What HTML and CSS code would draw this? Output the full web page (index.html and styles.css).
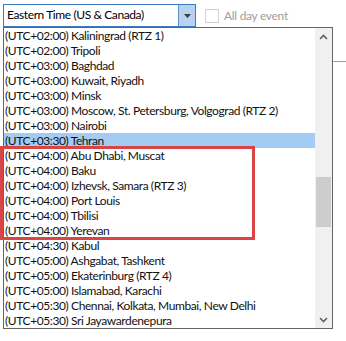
FILE: index.html
```html
<!DOCTYPE html>
<html lang="en">
  <head>
    <meta charset="UTF-8" />
    <title>time zone</title>
    <link rel="stylesheet" href="styles.css">
  </head>
  <body>
    <div class="toolbar">
      <div class="combo">
        <span class="combo-text">Eastern Time (US &amp; Canada)</span>
        <span class="combo-btn">
          <svg width="7" height="4" viewBox="0 0 7 4"><path d="M0 0h7L3.5 4z" fill="#3a3a3a"/></svg>
        </span>
      </div>
      <div class="allday">
        <span class="check"></span>
        <span class="allday-label">All day event</span>
      </div>
    </div>
    <div class="backline"></div>
    <div class="list">
      <div class="items">
        <div class="row">(UTC+02:00) Kaliningrad (RTZ 1)</div>
        <div class="row">(UTC+02:00) Tripoli</div>
        <div class="row">(UTC+03:00) Baghdad</div>
        <div class="row">(UTC+03:00) Kuwait, Riyadh</div>
        <div class="row">(UTC+03:00) Minsk</div>
        <div class="row">(UTC+03:00) Moscow, St. Petersburg, Volgograd (RTZ 2)</div>
        <div class="row">(UTC+03:00) Nairobi</div>
        <div class="row selected">(UTC+03:30) Tehran</div>
        <div class="row">(UTC+04:00) Abu Dhabi, Muscat</div>
        <div class="row">(UTC+04:00) Baku</div>
        <div class="row">(UTC+04:00) Izhevsk, Samara (RTZ 3)</div>
        <div class="row">(UTC+04:00) Port Louis</div>
        <div class="row">(UTC+04:00) Tbilisi</div>
        <div class="row">(UTC+04:00) Yerevan</div>
        <div class="row">(UTC+04:30) Kabul</div>
        <div class="row">(UTC+05:00) Ashgabat, Tashkent</div>
        <div class="row">(UTC+05:00) Ekaterinburg (RTZ 4)</div>
        <div class="row">(UTC+05:00) Islamabad, Karachi</div>
        <div class="row">(UTC+05:30) Chennai, Kolkata, Mumbai, New Delhi</div>
        <div class="row">(UTC+05:30) Sri Jayawardenepura</div>
      </div>
      <div class="scrollbar">
        <span class="arrow">
          <svg width="9" height="6" viewBox="0 0 9 6"><path d="M1 5l3.5-3.5L8 5" fill="none" stroke="#606060" stroke-width="1.6"/></svg>
        </span>
        <div class="track">
          <div class="thumb"></div>
        </div>
        <span class="arrow">
          <svg width="9" height="6" viewBox="0 0 9 6"><path d="M1 1l3.5 3.5L8 1" fill="none" stroke="#606060" stroke-width="1.6"/></svg>
        </span>
      </div>
    </div>
    <div class="highlight"></div>
  </body>
</html>
```

FILE: styles.css
```css
* {
  box-sizing: border-box;
}
body {
  margin: 0;
  background: #fff;
  font-family: Lato, "Noto Sans", sans-serif;
  font-size: 12px;
  letter-spacing: -0.4px;
  color: #111;
}
.toolbar {
  display: flex;
  align-items: center;
  padding: 4px 0 0 3px;
}
.combo {
  display: flex;
  width: 193px;
  height: 23px;
  border: 1px solid #3d7bc0;
}
.combo-text {
  flex: 1;
  padding-left: 3px;
  line-height: 20px;
  font-size: 12px;
  color: #000;
}
.combo-btn {
  width: 17px;
  display: flex;
  align-items: center;
  justify-content: center;
  background: #b7d3f0;
  border-left: 1px solid #5c92cc;
}
.allday {
  display: flex;
  align-items: center;
  margin-left: 9px;
}
.check {
  width: 14px;
  height: 14px;
  border: 1px solid #cfcfcf;
}
.allday-label {
  margin-left: 5px;
  color: #9e9e9e;
  font-size: 12px;
  letter-spacing: -0.3px;
}
.backline {
  position: absolute;
  left: 333px;
  top: 61px;
  width: 13px;
  height: 1px;
  background: #9c9c9c;
}
.list {
  display: flex;
  margin-left: 3px;
  width: 330px;
  height: 302px;
  border: 1px solid #646464;
}
.items {
  flex: 1;
}
.row {
  height: 15px;
  line-height: 15px;
  padding-left: 1px;
  white-space: nowrap;
}
.row.selected {
  background: #a4cbf1;
}
.scrollbar {
  width: 17px;
  display: flex;
  flex-direction: column;
  background: #f0f0f0;
}
.arrow {
  height: 17px;
  display: flex;
  align-items: center;
  justify-content: center;
}
.track {
  flex: 1;
  padding-top: 132px;
}
.thumb {
  margin: 0 1px;
  height: 50px;
  background: #cdcdcd;
}
.highlight {
  position: absolute;
  left: 0;
  top: 146px;
  width: 255px;
  height: 94px;
  border: 3px solid #d94444;
}
```
